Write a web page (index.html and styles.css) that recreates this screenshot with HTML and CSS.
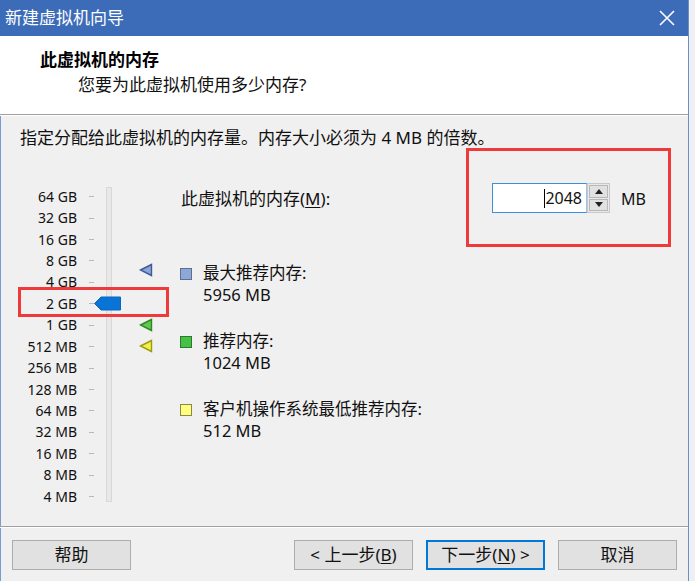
FILE: index.html
```html
<!DOCTYPE html>
<html lang="zh-CN">
<head>
<meta charset="utf-8">
<title>新建虚拟机向导</title>
<link rel="stylesheet" href="styles.css">
</head>
<body>
<div class="window">
  <div class="titlebar">
    <span class="title">新建虚拟机向导</span>
    <svg class="close" width="18" height="18" viewBox="0 0 18 18"><path d="M2 2 L16 16 M16 2 L2 16" stroke="#fff" stroke-width="1.6" fill="none"/></svg>
  </div>
  <div class="header">
    <div class="h-title">此虚拟机的内存</div>
    <div class="h-sub">您要为此虚拟机使用多少内存?</div>
  </div>
  <div class="content">
    <div class="instr">指定分配给此虚拟机的内存量。内存大小必须为 4 MB 的倍数。</div>
    <div class="main">
      <div class="slider">
        <div class="labels">
          <div class="row"><span class="lab">64 GB</span><span class="tick"></span></div>
          <div class="row"><span class="lab">32 GB</span><span class="tick"></span></div>
          <div class="row"><span class="lab">16 GB</span><span class="tick"></span></div>
          <div class="row"><span class="lab">8 GB</span><span class="tick"></span></div>
          <div class="row"><span class="lab">4 GB</span><span class="tick"></span></div>
          <div class="row"><span class="lab">2 GB</span><span class="tick"></span></div>
          <div class="row"><span class="lab">1 GB</span><span class="tick"></span></div>
          <div class="row"><span class="lab">512 MB</span><span class="tick"></span></div>
          <div class="row"><span class="lab">256 MB</span><span class="tick"></span></div>
          <div class="row"><span class="lab">128 MB</span><span class="tick"></span></div>
          <div class="row"><span class="lab">64 MB</span><span class="tick"></span></div>
          <div class="row"><span class="lab">32 MB</span><span class="tick"></span></div>
          <div class="row"><span class="lab">16 MB</span><span class="tick"></span></div>
          <div class="row"><span class="lab">8 MB</span><span class="tick"></span></div>
          <div class="row"><span class="lab">4 MB</span><span class="tick"></span></div>
        </div>
        <div class="track"></div>
        <svg class="thumb" width="28" height="15" viewBox="0 0 28 15"><path d="M0.5 7.5 L7 1 L26.5 1 L26.5 14 L7 14 Z" fill="#0a73d6" stroke="#0a66c2" stroke-width="1"/></svg>
        <svg class="mark m-max" width="14" height="14" viewBox="0 0 14 14"><path d="M1.5 7 L12.5 1.5 L12.5 12.5 Z" fill="#8aa6d8" stroke="#3d5b98" stroke-width="1.4"/></svg>
        <svg class="mark m-rec" width="14" height="14" viewBox="0 0 14 14"><path d="M1.5 7 L12.5 1.5 L12.5 12.5 Z" fill="#63c653" stroke="#2a8a20" stroke-width="1.4"/></svg>
        <svg class="mark m-min" width="14" height="14" viewBox="0 0 14 14"><path d="M1.5 7 L12.5 1.5 L12.5 12.5 Z" fill="#f4f04a" stroke="#9c9a10" stroke-width="1.4"/></svg>
        <div class="redbox rb-left"></div>
      </div>
      <div class="right">
        <div class="memrow">
          <span class="memlabel">此虚拟机的内存(<u>M</u>):</span>
          <div class="spin">
            <div class="field"><span class="caret"></span>2048</div>
            <div class="spinbtns">
              <div class="sb"><svg width="8" height="5" viewBox="0 0 8 5"><path d="M0 5 L4 0 L8 5 Z" fill="#222"/></svg></div>
              <div class="sb"><svg width="8" height="5" viewBox="0 0 8 5"><path d="M0 0 L4 5 L8 0 Z" fill="#222"/></svg></div>
            </div>
          </div>
          <span class="unit">MB</span>
          <div class="redbox rb-right"></div>
        </div>
        <div class="legend">
          <div class="item">
            <span class="sq sq-max"></span>
            <div class="itext"><div>最大推荐内存:</div><div>5956 MB</div></div>
          </div>
          <div class="item">
            <span class="sq sq-rec"></span>
            <div class="itext"><div>推荐内存:</div><div>1024 MB</div></div>
          </div>
          <div class="item">
            <span class="sq sq-min"></span>
            <div class="itext"><div>客户机操作系统最低推荐内存:</div><div>512 MB</div></div>
          </div>
        </div>
      </div>
    </div>
  </div>
  <div class="footer">
    <button class="btn">帮助</button>
    <div class="spacer"></div>
    <button class="btn">&lt; 上一步(<u>B</u>)</button>
    <button class="btn btn-default">下一步(<u>N</u>) &gt;</button>
    <button class="btn">取消</button>
  </div>
</div>
</body>
</html>
```
FILE: styles.css
```css
html, body {
  margin: 0;
  padding: 0;
}
body {
  width: 695px;
  height: 581px;
  background: #eef0f3;
  font-family: "Noto Sans", "Noto Sans CJK SC", sans-serif;
  color: #111;
  overflow: hidden;
}
.window {
  width: 688px;
  height: 581px;
  border-right: 1px solid #6f8fc4;
  background: #f0f0f0;
  display: flex;
  flex-direction: column;
  position: relative;
  box-shadow: inset 1px 0 0 #7d9ad0;
}
.titlebar {
  height: 36px;
  background: #3c6cb8;
  display: flex;
  align-items: center;
  padding-left: 5px;
  padding-right: 12px;
  flex: none;
}
.title {
  color: #fff;
  font-size: 17px;
  flex: 1;
  line-height: 20px;
  margin-top: -1px;
}
.close {
  display: block;
}
.header {
  height: 79px;
  background: #fff;
  border-bottom: 1px solid #a0a0a0;
  box-shadow: 0 1px 0 #fff;
  flex: none;
  box-sizing: border-box;
  padding-top: 13px;
}
.h-title {
  font-weight: bold;
  font-size: 17px;
  line-height: 22px;
  padding-left: 40px;
  color: #000;
}
.h-sub {
  font-size: 17px;
  line-height: 22px;
  padding-left: 78px;
  margin-top: 3px;
  color: #111;
}
.content {
  flex: 1;
  display: flex;
  flex-direction: column;
  padding-top: 13px;
}
.instr {
  font-size: 17px;
  line-height: 20px;
  padding-left: 20px;
}
.main {
  display: flex;
  margin-top: 37px;
}
.slider {
  position: relative;
  width: 180px;
  flex: none;
  padding-top: 1px;
}
.labels {
  display: flex;
  flex-direction: column;
}
.row {
  height: 21.43px;
  display: flex;
  align-items: center;
}
.lab {
  width: 77px;
  text-align: right;
  font-size: 14px;
  line-height: 16px;
  color: #111;
}
.tick {
  width: 5px;
  height: 1px;
  background: #b9b9b9;
  margin-left: 12px;
}
.track {
  position: absolute;
  left: 106px;
  top: 2px;
  width: 4px;
  height: 313px;
  background: #e8e8e8;
  border: 1px solid #d8d8d8;
}
.thumb {
  position: absolute;
  left: 94px;
  top: 111px;
}
.mark {
  position: absolute;
  left: 139px;
}
.m-max { top: 78px; }
.m-rec { top: 133px; }
.m-min { top: 154px; }
.redbox {
  position: absolute;
  border: 3px solid #ee3a3a;
  box-sizing: border-box;
  pointer-events: none;
}
.rb-left {
  left: 18px;
  top: 102px;
  width: 151px;
  height: 30px;
}
.right {
  flex: 1;
  display: flex;
  flex-direction: column;
}
.memrow {
  position: relative;
  display: flex;
  align-items: center;
  height: 30px;
  margin-top: -2px;
  padding-left: 1px;
}
.memlabel {
  font-size: 17px;
  line-height: 20px;
  width: 311px;
  margin-top: 2px;
}
.memlabel u, .btn u {
  text-decoration-thickness: 1px;
  text-underline-offset: 2px;
}
.spin {
  display: flex;
  height: 30px;
}
.field {
  width: 95px;
  height: 30px;
  box-sizing: border-box;
  border: 1px solid #3b8ee0;
  border-right-color: #9dc2ea;
  background: #fff;
  font-size: 16px;
  line-height: 28px;
  text-align: right;
  padding-right: 4px;
  display: flex;
  justify-content: flex-end;
  align-items: center;
}
.caret {
  width: 1px;
  height: 19px;
  background: #000;
}
.spinbtns {
  width: 23px;
  display: flex;
  flex-direction: column;
  border: 1px solid #c8c8c8;
  box-sizing: border-box;
  background: #e9e9e9;
  padding: 1px;
  gap: 1px;
}
.sb {
  flex: 1;
  display: flex;
  align-items: center;
  justify-content: center;
  background: #e1e1e1;
  border: 1px solid #b8b8b8;
}
.sb svg { display: block; }
.unit {
  font-size: 16px;
  line-height: 20px;
  margin-left: 11px;
  margin-top: 1px;
}
.rb-right {
  left: 286px;
  top: -35px;
  width: 205px;
  height: 99px;
}
.legend {
  display: flex;
  flex-direction: column;
  margin-top: 49px;
  gap: 24px;
}
.item {
  display: flex;
  align-items: flex-start;
}
.sq {
  width: 10px;
  height: 10px;
  margin-top: 6px;
  margin-right: 11px;
  flex: none;
  border: 1px solid;
}
.sq-max { background: #8ea8d6; border-color: #5b6f98; }
.sq-rec { background: #48c048; border-color: #2b7a2b; }
.sq-min { background: #ffff84; border-color: #8a8a3a; }
.itext {
  font-size: 16.5px;
  line-height: 22px;
  color: #111;
}
.footer {
  flex: none;
  height: 55px;
  border-top: 1px solid #a0a0a0;
  box-shadow: inset 0 1px 0 #fff;
  display: flex;
  align-items: flex-start;
  padding: 13px 11px 0 12px;
  gap: 13px;
  box-sizing: border-box;
}
.spacer {
  flex: 1;
}
.btn {
  width: 119px;
  height: 30px;
  background: #e1e1e1;
  border: 1px solid #adadad;
  font-family: "Noto Sans", "Noto Sans CJK SC", sans-serif;
  font-size: 17px;
  line-height: 20px;
  color: #111;
  padding: 0;
  margin: 0;
  box-sizing: border-box;
}
.btn-default {
  border: 2px solid #0078d7;
}
```
